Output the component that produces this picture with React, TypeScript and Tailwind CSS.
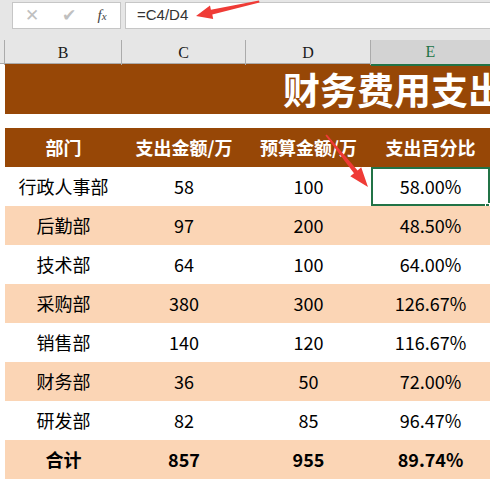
import React from 'react';

const rows = [
  { dept: '行政人事部', spend: '58', budget: '100', pct: '58.00%' },
  { dept: '后勤部', spend: '97', budget: '200', pct: '48.50%' },
  { dept: '技术部', spend: '64', budget: '100', pct: '64.00%' },
  { dept: '采购部', spend: '380', budget: '300', pct: '126.67%' },
  { dept: '销售部', spend: '140', budget: '120', pct: '116.67%' },
  { dept: '财务部', spend: '36', budget: '50', pct: '72.00%' },
  { dept: '研发部', spend: '82', budget: '85', pct: '96.47%' },
];

const cjk = "font-['Noto_Sans_CJK_SC',sans-serif]";
const cols = 'grid grid-cols-[5px_117px_124px_125px_119px]';

const Arrows: React.FC = () => (
  <svg className="absolute left-0 top-0 pointer-events-none" width={490} height={479}>
    {/* formula arrow */}
    <polygon
      points="196,16 210,5.4 210.9,9.8 259,0.5 259.5,2.5 212.3,14.6 213.2,19"
      fill="#ef3b36"
    />
    {/* cell arrow */}
    <polygon
      points="368,187 350.3,176.3 354,173.3 325.4,135.6 326.8,134.6 357.6,170.6 361.2,167.2"
      fill="#ef3b36"
    />
  </svg>
);

const App: React.FC = () => {
  return (
    <div className="relative w-[490px] h-[479px] overflow-hidden bg-white">
      {/* formula bar */}
      <div className="h-[40px] bg-[#e6e6e6] flex items-start pt-[2px]">
        <div className="ml-[12px] w-[109px] h-[27px] bg-white border border-[#c6c6c6] flex items-center">
          <span className="w-[38px] text-center text-[#c0c0c0] text-[17px] font-['DejaVu_Sans',sans-serif] leading-none">✕</span>
          <span className="w-[36px] text-center text-[#c0c0c0] text-[17px] font-['DejaVu_Sans',sans-serif] leading-none">✔</span>
          <span className="w-[30px] text-center text-[#444] text-[15px] italic font-['Liberation_Serif',serif] leading-none">
            f<span className="text-[11px]">x</span>
          </span>
        </div>
        <div className="ml-[4px] flex-1 h-[27px] bg-white border border-[#c6c6c6] border-r-0 flex items-center pl-[11px]">
          <span className="text-[15px] text-[#333] font-['Liberation_Sans',sans-serif]">=C4/D4</span>
        </div>
      </div>

      {/* column headers */}
      <div className={`${cols} h-[24px] bg-[#e6e6e6] border-b border-[#ababab] font-['Liberation_Serif',serif] text-[16px] text-[#1a1a1a]`}>
        <div className="border-r border-[#ababab]" />
        <div className="border-r border-[#ababab] flex items-center justify-center">B</div>
        <div className="border-r border-[#ababab] flex items-center justify-center">C</div>
        <div className="border-r border-[#ababab] flex items-center justify-center">D</div>
        <div className="bg-[#d3d3d3] border-b-[2px] border-[#217346] -mb-px flex items-center justify-center text-[#217346]">E</div>
      </div>

      {/* title */}
      <div className="h-[50px] ml-[5px] bg-[#974706] flex items-center pl-[278px] overflow-hidden">
        <span className={`${cjk} text-[37px] font-bold text-white whitespace-nowrap leading-none`}>财务费用支出</span>
      </div>
      <div className="h-[14px]" />

      {/* table header */}
      <div className={`${cols} h-[39px] ${cjk} text-[18px] font-bold text-white`}>
        <div />
        <div className="bg-[#974706] flex items-center justify-center">部门</div>
        <div className="bg-[#974706] flex items-center justify-center">支出金额/万</div>
        <div className="bg-[#974706] flex items-center justify-center">预算金额/万</div>
        <div className="bg-[#974706] flex items-center justify-center">支出百分比</div>
      </div>

      {rows.map((r, i) => {
        const bg = i % 2 === 1 ? 'bg-[#fbd5b5]' : 'bg-white';
        return (
          <div key={r.dept} className={`${cols} h-[39px] ${cjk} text-[18px] text-black`}>
            <div />
            <div className={`${bg} flex items-center justify-center`}>{r.dept}</div>
            <div className={`${bg} flex items-center justify-center`}>{r.spend}</div>
            <div className={`${bg} flex items-center justify-center`}>{r.budget}</div>
            <div
              className={`${bg} relative flex items-center justify-center ${
                i === 0 ? 'border-2 border-[#217346]' : ''
              }`}
            >
              {r.pct}
              {i === 0 && (
                <span className="absolute -right-[2px] -bottom-[4px] w-[5px] h-[5px] bg-[#217346] border border-white" />
              )}
            </div>
          </div>
        );
      })}

      {/* total */}
      <div className={`${cols} h-[39px] ${cjk} text-[18px] font-bold text-black`}>
        <div />
        <div className="bg-[#fbd5b5] flex items-center justify-center">合计</div>
        <div className="bg-[#fbd5b5] flex items-center justify-center">857</div>
        <div className="bg-[#fbd5b5] flex items-center justify-center">955</div>
        <div className="bg-[#fbd5b5] flex items-center justify-center">89.74%</div>
      </div>

      <Arrows />
    </div>
  );
};

export default App;
